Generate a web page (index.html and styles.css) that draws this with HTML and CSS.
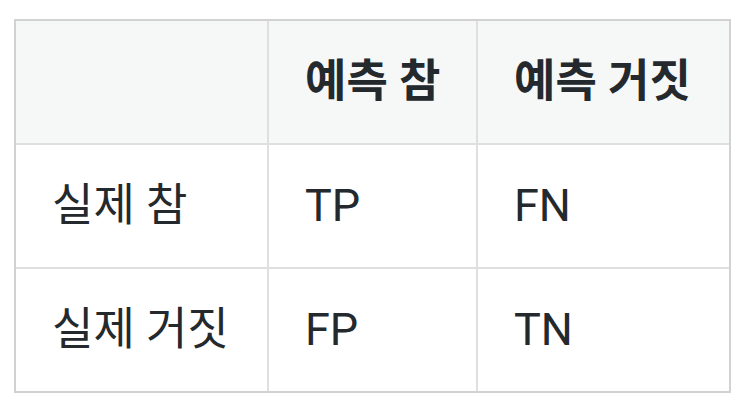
FILE: index.html
```html
<!DOCTYPE html>
<html lang="ko">
<head>
<meta charset="utf-8">
<link rel="stylesheet" href="styles.css">
</head>
<body>
<table class="matrix">
  <thead>
    <tr>
      <th class="c1"></th>
      <th class="c2">예측 참</th>
      <th class="c3">예측 거짓</th>
    </tr>
  </thead>
  <tbody>
    <tr>
      <td class="c1">실제 참</td>
      <td class="c2">TP</td>
      <td class="c3">FN</td>
    </tr>
    <tr class="last">
      <td class="c1">실제 거짓</td>
      <td class="c2">FP</td>
      <td class="c3">TN</td>
    </tr>
  </tbody>
</table>
</body>
</html>
```

FILE: styles.css
```css
html, body {
  margin: 0;
  padding: 0;
  background: #ffffff;
}
body {
  padding: 19px 0 0 14px;
  font-family: Roboto, "Noto Sans CJK KR", sans-serif;
  color: #24292e;
}
.matrix {
  border-collapse: separate;
  border-spacing: 0;
  border: 2px solid #d2d2d2;
  table-layout: fixed;
  width: 717px;
}
.matrix th,
.matrix td {
  box-sizing: border-box;
  height: 124px;
  padding: 0 36px;
  font-size: 45px;
  line-height: 52px;
  text-align: left;
  vertical-align: middle;
  border-right: 2px solid #dfdfdf;
  border-bottom: 2px solid #dfdfdf;
  white-space: nowrap;
}
.matrix th {
  font-weight: 700;
  background: #f6f8f8;
}
.matrix .c1 { width: 253px; }
.matrix .c2 { width: 209px; }
.matrix .c3 { width: 251px; border-right: none; }
.matrix tr.last td { border-bottom: none; height: 122px; }
```
